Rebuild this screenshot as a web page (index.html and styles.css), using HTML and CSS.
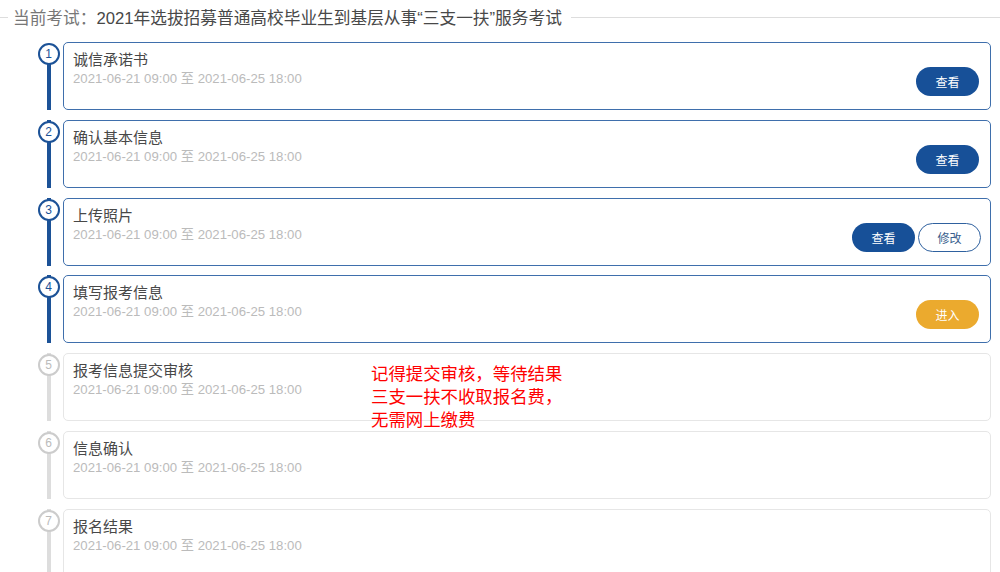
FILE: index.html
```html
<!DOCTYPE html>
<html lang="zh-CN">
<head>
    <meta charset="UTF-8">
    <title>报名流程</title>
    <link rel="stylesheet" href="styles.css">
</head>
<body>

<div class="exam-title">
    <span class="label">当前考试：</span><span class="name">2021年选拔招募普通高校毕业生到基层从事“三支一扶”服务考试</span>
</div>

<div class="steps">
    <!-- done steps -->
    <div class="step done">
        <div class="marker"><span class="num">1</span></div>
        <div class="card">
            <div class="info">
                <div class="title">诚信承诺书</div>
                <div class="date">2021-06-21 09:00 至 2021-06-25 18:00</div>
            </div>
            <div class="actions">
                <button class="btn primary">查看</button>
            </div>
        </div>
    </div>
    <div class="step done">
        <div class="marker"><span class="num">2</span></div>
        <div class="card">
            <div class="info">
                <div class="title">确认基本信息</div>
                <div class="date">2021-06-21 09:00 至 2021-06-25 18:00</div>
            </div>
            <div class="actions">
                <button class="btn primary">查看</button>
            </div>
        </div>
    </div>
    <div class="step done">
        <div class="marker"><span class="num">3</span></div>
        <div class="card">
            <div class="info">
                <div class="title">上传照片</div>
                <div class="date">2021-06-21 09:00 至 2021-06-25 18:00</div>
            </div>
            <div class="actions tight">
                <button class="btn primary">查看</button>
                <button class="btn outline">修改</button>
            </div>
        </div>
    </div>
    <div class="step done">
        <div class="marker"><span class="num">4</span></div>
        <div class="card">
            <div class="info">
                <div class="title">填写报考信息</div>
                <div class="date">2021-06-21 09:00 至 2021-06-25 18:00</div>
            </div>
            <div class="actions">
                <button class="btn warn">进入</button>
            </div>
        </div>
    </div>

    <!-- pending steps -->
    <div class="step">
        <div class="marker"><span class="num">5</span></div>
        <div class="card">
            <div class="info">
                <div class="title">报考信息提交审核</div>
                <div class="date">2021-06-21 09:00 至 2021-06-25 18:00</div>
            </div>
        </div>
        <div class="note">记得提交审核，等待结果<br>三支一扶不收取报名费，<br>无需网上缴费</div>
    </div>
    <div class="step">
        <div class="marker"><span class="num">6</span></div>
        <div class="card">
            <div class="info">
                <div class="title">信息确认</div>
                <div class="date">2021-06-21 09:00 至 2021-06-25 18:00</div>
            </div>
        </div>
    </div>
    <div class="step">
        <div class="marker"><span class="num">7</span></div>
        <div class="card">
            <div class="info">
                <div class="title">报名结果</div>
                <div class="date">2021-06-21 09:00 至 2021-06-25 18:00</div>
            </div>
        </div>
    </div>
</div>

</body>
</html>
```

FILE: styles.css
```css
* {
    margin: 0;
    padding: 0;
    box-sizing: border-box;
}
body {
    font-family: "Liberation Sans", "Noto Sans CJK SC", sans-serif;
    background: #fff;
    color: #444;
    overflow: hidden;
}

/* Exam title with rule lines */
.exam-title {
    display: flex;
    align-items: center;
    height: 34px;
    font-size: 16.7px;
    margin-bottom: 8px;
}
.exam-title::before {
    content: "";
    width: 8px;
    border-top: 1px solid #ddd;
    margin-right: 5px;
}
.exam-title::after {
    content: "";
    flex: 1;
    border-top: 1px solid #ddd;
    margin-left: 9px;
}
.exam-title .label {
    color: #777;
}
.exam-title .name {
    color: #484848;
}

/* Steps */
.steps {
    padding: 0 9px 0 37px;
}
.step {
    display: flex;
    position: relative;
    padding-bottom: 9.8px;
}
.marker {
    width: 23px;
    flex-shrink: 0;
    position: relative;
    display: flex;
    justify-content: center;
    padding-top: 1px;
}
.marker::before {
    content: "";
    position: absolute;
    top: 0;
    bottom: 0;
    left: 9.5px;
    width: 4px;
    background: #ddd;
}
.step.done .marker::before {
    background: #1c5297;
}
.step:first-child .marker::before {
    top: 10px;
}
.num {
    position: relative;
    width: 22px;
    height: 22px;
    border-radius: 50%;
    border: 2px solid #ccc;
    background: #fff;
    color: #bbb;
    font-size: 12px;
    line-height: 18px;
    text-align: center;
}
.step.done .num {
    border-color: #1c5297;
    color: #1c5297;
}

.card {
    flex: 1;
    margin-left: 3px;
    height: 68px;
    border: 1px solid #e6e6e6;
    border-radius: 5px;
    display: flex;
    justify-content: space-between;
    padding: 7px 11px 13px 9px;
}
.step.done .card {
    border-color: #3f6fac;
}
.title {
    font-size: 15px;
    color: #484848;
    line-height: 20px;
}
.date {
    font-size: 13.2px;
    color: #bbb;
    line-height: 18px;
}

/* Buttons */
.actions {
    align-self: flex-end;
    display: flex;
    gap: 3px;
}
.actions.tight {
    margin-right: -2px;
}
.btn {
    width: 63px;
    height: 29px;
    border-radius: 15px;
    border: 1px solid transparent;
    font-family: inherit;
    font-size: 12px;
    color: #fff;
    cursor: pointer;
}
.btn.primary {
    background: #175098;
}
.btn.outline {
    background: #fff;
    border-color: #2f619f;
    color: #3b5f8e;
}
.btn.warn {
    background: #ebaa2e;
}

/* Red annotation over steps 5/6 */
.note {
    position: absolute;
    left: 334px;
    top: 10px;
    font-size: 17.4px;
    line-height: 23px;
    color: #f00;
}
```
